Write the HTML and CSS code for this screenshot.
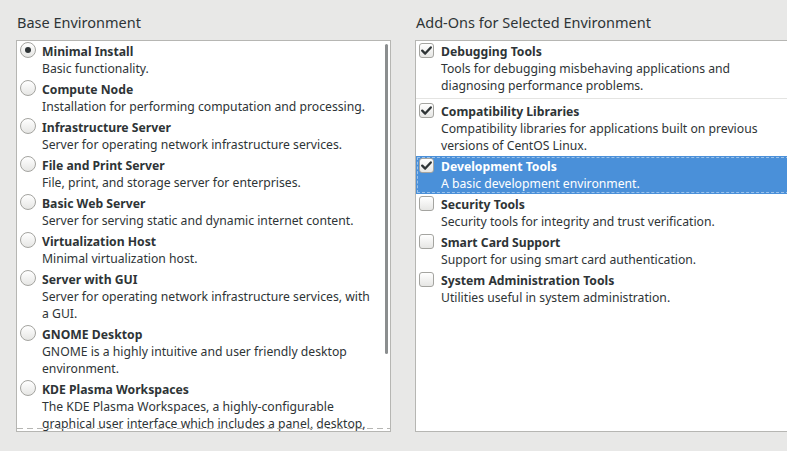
FILE: index.html
```html
<!DOCTYPE html>
<html lang="en">
<head>
<meta charset="utf-8">
<title>Software Selection</title>
<link rel="stylesheet" href="styles.css">
</head>
<body>
<div class="page">
  <section class="col">
    <h2 class="col-title">Base Environment</h2>
    <div class="list list-base">
      <div class="item">
        <span class="radio checked"></span>
        <div class="text"><div class="title">Minimal Install</div><div class="desc">Basic functionality.</div></div>
      </div>
      <div class="item">
        <span class="radio"></span>
        <div class="text"><div class="title">Compute Node</div><div class="desc">Installation for performing computation and processing.</div></div>
      </div>
      <div class="item">
        <span class="radio"></span>
        <div class="text"><div class="title">Infrastructure Server</div><div class="desc">Server for operating network infrastructure services.</div></div>
      </div>
      <div class="item">
        <span class="radio"></span>
        <div class="text"><div class="title">File and Print Server</div><div class="desc">File, print, and storage server for enterprises.</div></div>
      </div>
      <div class="item">
        <span class="radio"></span>
        <div class="text"><div class="title">Basic Web Server</div><div class="desc">Server for serving static and dynamic internet content.</div></div>
      </div>
      <div class="item">
        <span class="radio"></span>
        <div class="text"><div class="title">Virtualization Host</div><div class="desc">Minimal virtualization host.</div></div>
      </div>
      <div class="item">
        <span class="radio"></span>
        <div class="text"><div class="title">Server with GUI</div><div class="desc">Server for operating network infrastructure services, with a GUI.</div></div>
      </div>
      <div class="item">
        <span class="radio"></span>
        <div class="text"><div class="title">GNOME Desktop</div><div class="desc">GNOME is a highly intuitive and user friendly desktop environment.</div></div>
      </div>
      <div class="item">
        <span class="radio"></span>
        <div class="text"><div class="title">KDE Plasma Workspaces</div><div class="desc">The KDE Plasma Workspaces, a highly-configurable graphical user interface which includes a panel, desktop, system icons and desktop widgets, and many powerful KDE applications.</div></div>
      </div>
      <div class="scrollbar"></div>
      <div class="undershoot"></div>
    </div>
  </section>
  <section class="col">
    <h2 class="col-title">Add-Ons for Selected Environment</h2>
    <div class="list list-addons">
      <div class="item">
        <span class="check checked"><svg viewBox="0 0 15 15" width="15" height="15"><path d="M3.2 7.6 L6.2 10.6 L11.8 4.4" fill="none" stroke="#2e3436" stroke-width="2.3" stroke-linecap="round" stroke-linejoin="round"/></svg></span>
        <div class="text"><div class="title">Debugging Tools</div><div class="desc">Tools for debugging misbehaving applications and diagnosing performance problems.</div></div>
      </div>
      <div class="sep"></div>
      <div class="item">
        <span class="check checked"><svg viewBox="0 0 15 15" width="15" height="15"><path d="M3.2 7.6 L6.2 10.6 L11.8 4.4" fill="none" stroke="#2e3436" stroke-width="2.3" stroke-linecap="round" stroke-linejoin="round"/></svg></span>
        <div class="text"><div class="title">Compatibility Libraries</div><div class="desc">Compatibility libraries for applications built on previous versions of CentOS Linux.</div></div>
      </div>
      <div class="item selected">
        <span class="check checked"><svg viewBox="0 0 15 15" width="15" height="15"><path d="M3.2 7.6 L6.2 10.6 L11.8 4.4" fill="none" stroke="#2e3436" stroke-width="2.3" stroke-linecap="round" stroke-linejoin="round"/></svg></span>
        <div class="text"><div class="title">Development Tools</div><div class="desc">A basic development environment.</div></div>
      </div>
      <div class="item">
        <span class="check"></span>
        <div class="text"><div class="title">Security Tools</div><div class="desc">Security tools for integrity and trust verification.</div></div>
      </div>
      <div class="item">
        <span class="check"></span>
        <div class="text"><div class="title">Smart Card Support</div><div class="desc">Support for using smart card authentication.</div></div>
      </div>
      <div class="item">
        <span class="check"></span>
        <div class="text"><div class="title">System Administration Tools</div><div class="desc">Utilities useful in system administration.</div></div>
      </div>
    </div>
  </section>
</div>
</body>
</html>
```

FILE: styles.css
```css
html, body {
  margin: 0;
  padding: 0;
  background: #e8e8e7;
  overflow: hidden;
}

body {
  font-family: "Noto Sans", "Open Sans", sans-serif;
  color: #2e3436;
  font-size: 12.2px;
}

.page {
  display: grid;
  grid-template-columns: 375px 380px;
  column-gap: 24px;
  padding-left: 16px;
  width: 800px;
}

.col {
  display: flex;
  flex-direction: column;
}

.col-title {
  margin: 0;
  padding-top: 12px;
  padding-left: 1px;
  height: 20px;
  line-height: 20px;
  font-size: 14.5px;
  font-weight: normal;
  margin-bottom: 8px;
}

.list {
  position: relative;
  height: 390px;
  border: 1px solid #b6b6b3;
  background: #ffffff;
  overflow: hidden;
}

.list-addons {
  border-right: 0;
}

.item {
  display: grid;
  padding: 2px 0 2px 3px;
}

.list-base .item {
  grid-template-columns: 16px 1fr;
  column-gap: 6px;
  padding-right: 14px;
}

.list-addons .item {
  grid-template-columns: 15px 1fr;
  column-gap: 7px;
  padding-right: 30px;
}

.text {
  line-height: 17px;
}

.title {
  font-weight: bold;
}

.radio {
  width: 14px;
  height: 14px;
  margin-top: -1px;
  border: 1px solid #a4a4a0;
  border-radius: 50%;
  background: linear-gradient(#ffffff, #e6e6e4);
  position: relative;
}

.radio.checked::after {
  content: "";
  position: absolute;
  left: 4px;
  top: 4px;
  width: 6px;
  height: 6px;
  border-radius: 50%;
  background: #2e3436;
}

.check {
  width: 13px;
  height: 13px;
  border: 1px solid #a4a4a0;
  border-radius: 3px;
  background: linear-gradient(#ffffff, #e6e6e4);
  position: relative;
}

.check svg {
  position: absolute;
  left: -1px;
  top: -1px;
}

.sep {
  height: 1px;
  background: #e4e4e2;
  margin: 2px 0;
}

.selected {
  background: #4a90d9;
  color: #ffffff;
  outline: 1px dashed rgba(255, 255, 255, 0.45);
  outline-offset: -2px;
}

.scrollbar {
  position: absolute;
  left: 368px;
  top: 3px;
  width: 3px;
  height: 310px;
  border-radius: 2px;
  background: #8b8e8f;
}

.undershoot {
  position: absolute;
  left: 0;
  right: 0;
  bottom: 2px;
  height: 1px;
  background: repeating-linear-gradient(90deg, #b6b6b3 0 6px, transparent 6px 10px);
}
```
